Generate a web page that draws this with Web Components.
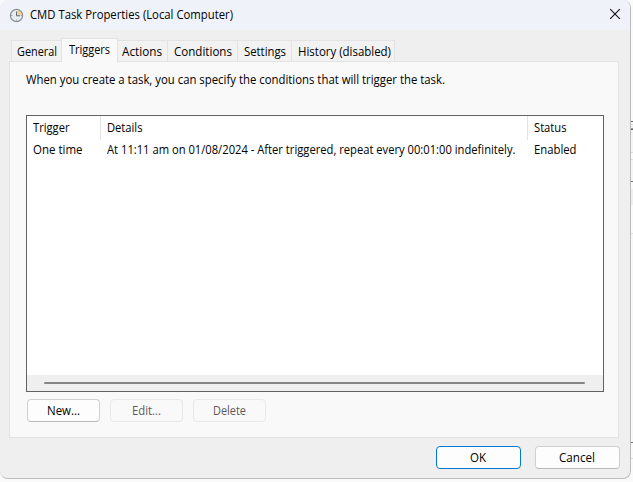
<!DOCTYPE html>
<html lang="en"><head><meta charset="utf-8"><title>CMD Task Properties</title>
<style>html,body{margin:0;width:633px;height:482px;overflow:hidden;background:#fafafa}
body{font:12px/16px "Open Sans","Noto Sans",sans-serif;color:#000}</style></head><body>
<task-window></task-window>
<script>
const define=(name,html,ready)=>customElements.define(name,class extends HTMLElement{
 connectedCallback(){if(this.shadowRoot)return;this.attachShadow({mode:'open'}).innerHTML=html;if(ready)ready.call(this,this.shadowRoot)}
});
/* A label condensed to the width given in its w attribute. */
define('ui-label',`<style>:host{display:block;white-space:nowrap;height:16px;flex:none}span{display:inline-block;transform-origin:0 50%}</style><span><slot></slot></span>`,function(r){
 const s=r.querySelector('span'),w=+this.getAttribute('w');this.style.width=w+'px';
 s.style.transform=`scaleX(${w/s.getBoundingClientRect().width})`;
});
define('ui-button',`<style>:host{display:flex;box-sizing:border-box;width:73px;height:23px;border:1px solid #d0d0d0;border-bottom-color:#bababa;border-radius:4px;background:#fdfdfd;align-items:center;justify-content:center;padding-right:1px;flex:none}
:host([disabled]){color:#5c5c5c;background:#f9f9f9;border-color:#e8e8e8}:host([wide]){width:85px}:host([primary]){border-color:#0078d4}</style><slot></slot>`);
define('ui-tab',`<style>:host{display:block;box-sizing:border-box;height:21px;border:1px solid #e3e3e3;border-left-width:0;border-bottom:0;background:#f2f2f2;padding:3px 0 0 4px;flex:none}
:host([first]){border-left-width:1px}:host([active]){height:24px;padding:3px 0 0 7px;background:#f9f9f9;border-left-width:1px;margin:0 0 -1px -1px}</style><slot></slot>`);
define('title-bar',`<style>:host{display:flex;height:30px;background:#eff3f9;padding-left:9px;flex:none}
.i{width:15px;height:15px;margin:8px 6px 0 0}ui-label{margin-top:7px}.x{width:12px;height:12px;margin:8px 9px 0 auto}</style>
<svg class="i" viewBox="0 0 15 15"><circle cx="7.5" cy="7.5" r="6.1" fill="#e6eef5" stroke="#8f9294" stroke-width="1.3"/><path d="M8 7V2.3A5.2 5.2 0 0 1 12.6 7Z" fill="#fbcf85"/><path d="M7.5 3.5V7.8H11" fill="none" stroke="#5b6c7a" stroke-width="1"/><path d="M2.3 7.5h1.2M7.5 11.5v1.2M11.8 7.5h1" stroke="#8b9aa5"/></svg>
<ui-label w="203">CMD Task Properties (Local Computer)</ui-label>
<svg class="x" viewBox="0 0 12 12"><path d="M1.2 1.2 10.8 10.8M10.8 1.2 1.2 10.8" stroke="#181818" stroke-width="1.15"/></svg>`);
define('tab-strip',`<style>:host{display:flex;align-items:flex-end;height:22px;padding-left:2px;position:relative;z-index:1}</style>
<ui-tab first style="width:51px;padding-left:5px"><ui-label w="40">General</ui-label></ui-tab><ui-tab active style="width:57px"><ui-label w="41">Triggers</ui-label></ui-tab><ui-tab style="width:50px"><ui-label w="40">Actions</ui-label></ui-tab><ui-tab style="width:70px;padding-left:6px"><ui-label w="58">Conditions</ui-label></ui-tab><ui-tab style="width:54px;padding-left:6px"><ui-label w="42">Settings</ui-label></ui-tab><ui-tab style="width:103px;padding-left:6px"><ui-label w="93">History (disabled)</ui-label></ui-tab>`);
define('trigger-list',`<style>:host{display:flex;flex-direction:column;box-sizing:border-box;width:578px;height:277px;border:1px solid #626262;background:#fff;margin:27px 0 0 16px}
.r{display:grid;grid-template-columns:74px 427px 75px;height:24px}.r>*{box-sizing:border-box;padding:4px 0 0 6px;height:24px}.h>*{border-right:1px solid #e2e2e2}.h>:last-child{border:0}.b>*{padding-top:2px}
.s{height:16px;margin-top:auto;background:#efefef;padding:7px 18px 0 17px;box-sizing:border-box}.s i{display:block;height:2px;border-radius:1px;background:#868686}</style>
<div class="r h"><div><ui-label w="36.5">Trigger</ui-label></div><div><ui-label w="35.5">Details</ui-label></div><div><ui-label w="32.5">Status</ui-label></div></div>
<div class="r b"><div><ui-label w="49.5">One time</ui-label></div><div><ui-label w="408.5">At 11:11 am on 01/08/2024 - After triggered, repeat every 00:01:00 indefinitely.</ui-label></div><div><ui-label w="42.5">Enabled</ui-label></div></div>
<div class="s"><i></i></div>`);
define('trigger-panel',`<style>:host{display:block;box-sizing:border-box;width:610px;height:377px;border:1px solid #e3e3e3;background:#f9f9f9}
.d{margin:10px 0 0 16px}.a{display:flex;gap:10px;margin:7px 0 0 17px}</style>
<ui-label class="d" w="419">When you create a task, you can specify the conditions that will trigger the task.</ui-label><trigger-list></trigger-list>
<div class="a"><ui-button><ui-label w="33">New...</ui-label></ui-button><ui-button disabled><ui-label w="29">Edit...</ui-label></ui-button><ui-button disabled><ui-label w="33">Delete</ui-label></ui-button></div>`);
define('task-dialog',`<style>:host{display:flex;flex-direction:column;box-sizing:border-box;width:631px;height:479px;background:#efefef;border-right:1px solid #bcbcbc;border-bottom:1px solid #bcbcbc;border-radius:8px;overflow:hidden;flex:none}
main{padding:9px 0 0 9px}footer{display:flex;gap:14px;padding:8px 10px 0;justify-content:flex-end}</style>
<title-bar></title-bar><main><tab-strip></tab-strip><trigger-panel></trigger-panel></main>
<footer><ui-button wide primary><ui-label w="16">OK</ui-label></ui-button><ui-button wide><ui-label w="36">Cancel</ui-label></ui-button></footer>`);
/* Sliver of the window that sits behind the dialog. */
define('back-window',`<style>:host{display:block;flex:1;height:482px;background:linear-gradient(#0000 121px,#666 121px 122px,#0000 122px 124px,#ddd 124px 125px,#f2f2f2 125px 128px,#999 128px 129px,#666 129px 130px,#f5f5f5 130px 152px,#ddd 152px 153px,#fafafa 153px 159px,#e0e0e0 159px 160px,#f5f5f5 160px 181px,#777 181px 182px,#fafafa 182px 189px,#efefef 189px 205px,#fafafa 205px 233px,#e0e0e0 233px 234px,#f7f7f7 234px 442px,#777 442px 443px,#fafafa 443px 458px,#ddd 458px 459px,#fafafa 459px)}</style>`);
define('task-window',`<style>:host{display:flex;width:633px;height:482px}</style><task-dialog></task-dialog><back-window></back-window>`);
</script></body></html>
